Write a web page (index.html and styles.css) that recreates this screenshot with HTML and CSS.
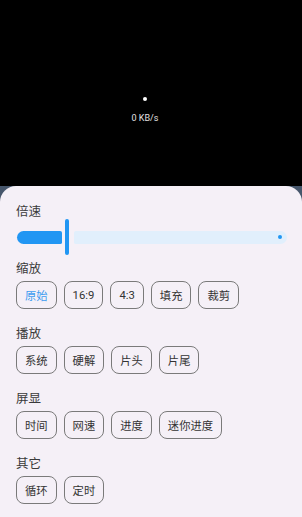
FILE: index.html
```html
<!DOCTYPE html>
<html lang="zh">
<head>
<meta charset="utf-8">
<link rel="stylesheet" href="styles.css">
</head>
<body>
<div class="video">
  <div class="loading">
    <span class="dot"></span>
    <span class="speed">0 KB/s</span>
  </div>
</div>
<div class="backdrop">
  <div class="sheet">
    <div class="label">倍速</div>
    <div class="slider">
      <div class="track-active"></div>
      <div class="thumb"></div>
      <div class="track-inactive"><span class="stop"></span></div>
    </div>

    <div class="section">
      <div class="label">缩放</div>
      <div class="chips">
        <span class="chip selected">原始</span>
        <span class="chip">16:9</span>
        <span class="chip">4:3</span>
        <span class="chip">填充</span>
        <span class="chip">裁剪</span>
      </div>
    </div>

    <div class="section">
      <div class="label">播放</div>
      <div class="chips">
        <span class="chip">系统</span>
        <span class="chip">硬解</span>
        <span class="chip">片头</span>
        <span class="chip">片尾</span>
      </div>
    </div>

    <div class="section">
      <div class="label">屏显</div>
      <div class="chips">
        <span class="chip">时间</span>
        <span class="chip">网速</span>
        <span class="chip">进度</span>
        <span class="chip">迷你进度</span>
      </div>
    </div>

    <div class="section">
      <div class="label">其它</div>
      <div class="chips">
        <span class="chip">循环</span>
        <span class="chip">定时</span>
      </div>
    </div>
  </div>
</div>
</body>
</html>
```

FILE: styles.css
```css
html, body {
  margin: 0;
  padding: 0;
}
body {
  width: 302px;
  height: 517px;
  overflow: hidden;
  background: #000;
  font-family: Roboto, "Noto Sans CJK SC", sans-serif;
}
.video {
  height: 186px;
  display: flex;
  justify-content: center;
}
.loading {
  display: flex;
  flex-direction: column;
  align-items: center;
  margin-right: 12px;
  padding-top: 97px;
}
.dot {
  width: 4px;
  height: 4px;
  border-radius: 50%;
  background: #fff;
}
.speed {
  margin-top: 12px;
  font-size: 9px;
  line-height: 11px;
  color: #e0e0e0;
}
.backdrop {
  background: #46566b;
  height: 331px;
}
.sheet {
  box-sizing: border-box;
  height: 100%;
  background: #f5f0f7;
  border-radius: 16px 16px 0 0;
  padding: 15px 16px 0 16px;
}
.label {
  font-family: "Noto Sans CJK SC", sans-serif;
  font-size: 12.5px;
  line-height: 20px;
  color: #3a3a3a;
}
.slider {
  position: relative;
  height: 38px;
  margin-top: -3px;
  display: flex;
  align-items: center;
}
.track-active {
  width: 45px;
  margin-left: 1px;
  height: 13px;
  background: #2196f3;
  border-radius: 7px 2px 2px 7px;
}
.thumb {
  width: 4px;
  height: 36px;
  margin-left: 3px;
  background: #2196f3;
  border-radius: 2px;
}
.track-inactive {
  flex: 1;
  margin-left: 5px;
  margin-right: -1px;
  height: 13px;
  background: #e1effc;
  border-radius: 2px 7px 7px 2px;
  display: flex;
  align-items: center;
  justify-content: flex-end;
}
.stop {
  width: 4px;
  height: 4px;
  border-radius: 50%;
  background: #2196f3;
  margin-right: 5px;
}
.section {
  margin-top: 2px;
  margin-bottom: 14px;
}
.section .label {
  margin-bottom: 3px;
}
.chips {
  display: flex;
  gap: 7px;
}
.chip {
  box-sizing: border-box;
  height: 28px;
  display: inline-flex;
  align-items: center;
  padding: 0 8px;
  border: 1px solid #7a7a7a;
  border-radius: 8px;
  font-family: Roboto, "Noto Sans CJK SC", sans-serif;
  font-size: 11.3px;
  color: #333;
}
.chip.selected {
  color: #3d9cf0;
}
```
